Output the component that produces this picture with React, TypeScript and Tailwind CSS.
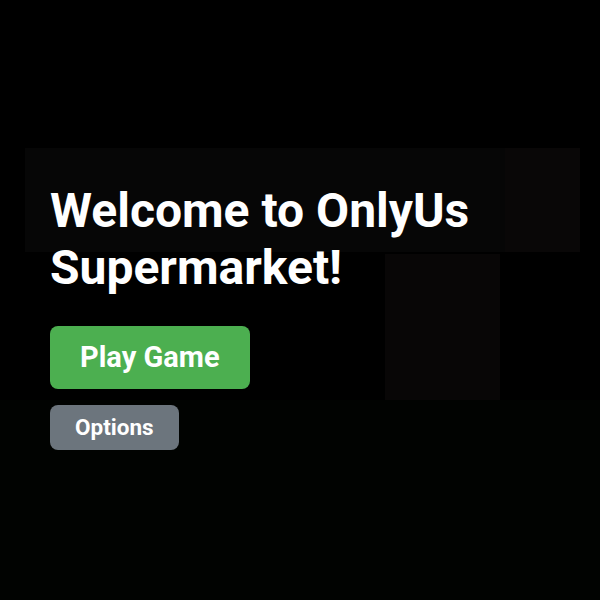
import React from 'react';

// Dim backdrop shapes of the store scene behind the menu
const Scenery: React.FC = () => (
    <div className="absolute inset-0 pointer-events-none">
        <div className="absolute left-[25px] top-[148px] w-[555px] h-[104px] bg-[#060606]" />
        <div className="absolute left-[505px] top-[148px] w-[75px] h-[104px] bg-[#090707]" />
        <div className="absolute left-[385px] top-[254px] w-[115px] h-[146px] bg-[#080606]" />
        <div className="absolute left-0 top-[400px] w-[600px] h-[200px] bg-[#010301]" />
    </div>
);

export default function App() {
    return (
        <div
            className="relative w-[600px] h-[600px] bg-black overflow-hidden"
            style={{ fontFamily: 'Roboto, "Noto Sans", sans-serif' }}
        >
            <Scenery />
            <div className="relative flex flex-col items-start pl-[50px] pt-[182px]">
                <h1 className="text-white font-bold text-[48px] leading-[57px] w-[480px]">
                    Welcome to OnlyUs Supermarket!
                </h1>
                <button className="mt-[30px] h-[63px] px-[30px] rounded-lg bg-[#4caf50] text-white text-[29px] font-bold">
                    Play Game
                </button>
                <button className="mt-[16px] h-[45px] px-[25px] rounded-lg bg-[#6c757d] text-white text-[22.5px] font-bold">
                    Options
                </button>
            </div>
        </div>
    );
}
